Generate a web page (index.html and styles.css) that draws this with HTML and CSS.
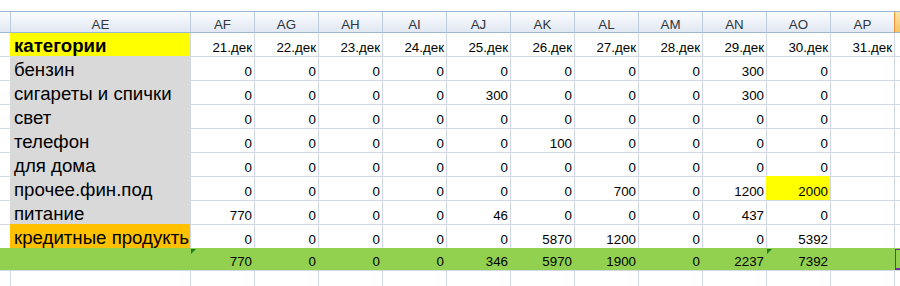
FILE: index.html
```html
<!DOCTYPE html>
<html lang="ru">
<head>
<meta charset="utf-8">
<title>Расходы</title>
<link rel="stylesheet" href="styles.css">
</head>
<body>
<div class="sheet">
  <div class="h first"></div><div class="h">AE</div><div class="h">AF</div><div class="h">AG</div><div class="h">AH</div><div class="h">AI</div><div class="h">AJ</div><div class="h">AK</div><div class="h">AL</div><div class="h">AM</div><div class="h">AN</div><div class="h">AO</div><div class="h">AP</div><div class="h sel"></div>

  <div class="c r1 first"></div><div class="c r1 t yellow bold">категории</div><div class="c r1 n">21.дек</div><div class="c r1 n">22.дек</div><div class="c r1 n">23.дек</div><div class="c r1 n">24.дек</div><div class="c r1 n">25.дек</div><div class="c r1 n">26.дек</div><div class="c r1 n">27.дек</div><div class="c r1 n">28.дек</div><div class="c r1 n">29.дек</div><div class="c r1 n">30.дек</div><div class="c r1 n">31.дек</div><div class="c r1"></div>

  <div class="c first"></div><div class="c t gray">бензин</div><div class="c n">0</div><div class="c n">0</div><div class="c n">0</div><div class="c n">0</div><div class="c n">0</div><div class="c n">0</div><div class="c n">0</div><div class="c n">0</div><div class="c n">300</div><div class="c n">0</div><div class="c"></div><div class="c"></div>

  <div class="c first"></div><div class="c t gray">сигареты и спички</div><div class="c n">0</div><div class="c n">0</div><div class="c n">0</div><div class="c n">0</div><div class="c n">300</div><div class="c n">0</div><div class="c n">0</div><div class="c n">0</div><div class="c n">300</div><div class="c n">0</div><div class="c"></div><div class="c"></div>

  <div class="c first"></div><div class="c t gray">свет</div><div class="c n">0</div><div class="c n">0</div><div class="c n">0</div><div class="c n">0</div><div class="c n">0</div><div class="c n">0</div><div class="c n">0</div><div class="c n">0</div><div class="c n">0</div><div class="c n">0</div><div class="c"></div><div class="c"></div>

  <div class="c first"></div><div class="c t gray">телефон</div><div class="c n">0</div><div class="c n">0</div><div class="c n">0</div><div class="c n">0</div><div class="c n">0</div><div class="c n">100</div><div class="c n">0</div><div class="c n">0</div><div class="c n">0</div><div class="c n">0</div><div class="c"></div><div class="c"></div>

  <div class="c first"></div><div class="c t gray">для дома</div><div class="c n">0</div><div class="c n">0</div><div class="c n">0</div><div class="c n">0</div><div class="c n">0</div><div class="c n">0</div><div class="c n">0</div><div class="c n">0</div><div class="c n">0</div><div class="c n">0</div><div class="c"></div><div class="c"></div>

  <div class="c first"></div><div class="c t gray">прочее.фин.под</div><div class="c n">0</div><div class="c n">0</div><div class="c n">0</div><div class="c n">0</div><div class="c n">0</div><div class="c n">0</div><div class="c n">700</div><div class="c n">0</div><div class="c n">1200</div><div class="c n yellow">2000</div><div class="c"></div><div class="c"></div>

  <div class="c first"></div><div class="c t gray">питание</div><div class="c n">770</div><div class="c n">0</div><div class="c n">0</div><div class="c n">0</div><div class="c n">46</div><div class="c n">0</div><div class="c n">0</div><div class="c n">0</div><div class="c n">437</div><div class="c n">0</div><div class="c"></div><div class="c"></div>

  <div class="c first"></div><div class="c t orange">кредитные продукть</div><div class="c n">0</div><div class="c n">0</div><div class="c n">0</div><div class="c n">0</div><div class="c n">0</div><div class="c n">5870</div><div class="c n">1200</div><div class="c n">0</div><div class="c n">0</div><div class="c n">5392</div><div class="c"></div><div class="c"></div>

  <div class="c first green"></div><div class="c t green"></div><div class="c n green flag">770</div><div class="c n green">0</div><div class="c n green">0</div><div class="c n green">0</div><div class="c n green">346</div><div class="c n green">5970</div><div class="c n green">1900</div><div class="c n green">0</div><div class="c n green">2237</div><div class="c n green flag">7392</div><div class="c green"></div><div class="c green active"></div>

  <div class="c first"></div><div class="c"></div><div class="c"></div><div class="c"></div><div class="c"></div><div class="c"></div><div class="c"></div><div class="c"></div><div class="c"></div><div class="c"></div><div class="c"></div><div class="c"></div><div class="c"></div><div class="c"></div>
</div>
</body>
</html>
```

FILE: styles.css
```css
html, body {
  margin: 0;
  padding: 0;
  background: #ffffff;
  overflow: hidden;
}

body {
  width: 900px;
  height: 286px;
  font-family: "Liberation Sans", Arial, sans-serif;
  color: #000;
}

.sheet {
  margin-top: 11px;
  border-top: 1px solid #9eb6ce;
  display: grid;
  grid-template-columns: 10px 180px repeat(11, 64px) 6px;
  grid-template-rows: 21px 23px repeat(8, 24px) 22px 16px;
  width: 900px;
  overflow: hidden;
}

.h {
  box-sizing: border-box;
  background: linear-gradient(#fbfcfe, #e1e8f2);
  border-left: 1px solid #bccbde;
  border-bottom: 1px solid #9eb6ce;
  font-size: 13.33px;
  line-height: 15px;
  color: #2c3540;
  display: flex;
  align-items: flex-end;
  justify-content: center;
}

.h.first {
  border-left: none;
}

.h.sel {
  background: linear-gradient(#fbe3ad, #f5c664);
  border-left: 1px solid #f29436;
}

.c {
  box-sizing: border-box;
  border-left: 1px solid #d0d7e5;
  border-top: 1px solid #d0d7e5;
  display: flex;
  align-items: flex-end;
  overflow: hidden;
  white-space: nowrap;
  position: relative;
}

.c.first {
  border-left: none;
}

.c.r1 {
  border-top: none;
}

.n {
  justify-content: flex-end;
  font-size: 13.33px;
  line-height: 15px;
  padding: 0 2px 1px 0;
}

.t {
  font-size: 18.67px;
  line-height: 21px;
  padding-left: 3px;
}

.bold {
  font-weight: bold;
}

.yellow {
  background: #ffff00;
  border-color: transparent;
}

.gray {
  background: #d9d9d9;
  border-color: transparent;
}

.orange {
  background: #ffc000;
  border-color: transparent;
}

.green {
  background: #92d050;
  border-color: transparent;
}

.flag::before {
  content: "";
  position: absolute;
  left: 0;
  top: 0;
  width: 0;
  height: 0;
  border-top: 5px solid #1d7a1d;
  border-right: 5px solid transparent;
}

.active::after {
  content: "";
  position: absolute;
  left: -1px;
  top: -1px;
  bottom: 0;
  width: 60px;
  border: 2px solid #7030a0;
  box-shadow: 0 0 0 1px #000;
}
```
